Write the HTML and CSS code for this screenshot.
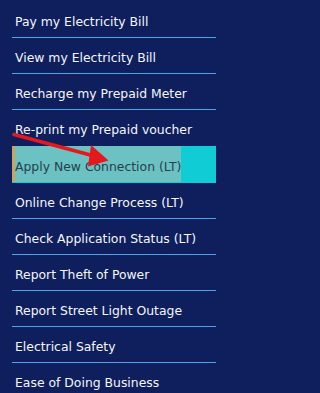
FILE: index.html
```html
<!DOCTYPE html>
<html lang="en">
<head>
<meta charset="utf-8">
<title>Menu</title>
<link rel="stylesheet" href="styles.css">
</head>
<body>
<nav class="menu">
  <ul class="menu-list">
    <li class="menu-item"><a class="menu-link" href="#">Pay my Electricity Bill</a></li>
    <li class="menu-item"><a class="menu-link" href="#">View my Electricity Bill</a></li>
    <li class="menu-item"><a class="menu-link" href="#">Recharge my Prepaid Meter</a></li>
    <li class="menu-item menu-item--before-active"><a class="menu-link" href="#">Re-print my Prepaid voucher</a></li>
    <li class="menu-item menu-item--active"><a class="menu-link" href="#"><span class="menu-mark">Apply New Connection (LT)</span></a></li>
    <li class="menu-item"><a class="menu-link" href="#">Online Change Process (LT)</a></li>
    <li class="menu-item"><a class="menu-link" href="#">Check Application Status (LT)</a></li>
    <li class="menu-item"><a class="menu-link" href="#">Report Theft of Power</a></li>
    <li class="menu-item"><a class="menu-link" href="#">Report Street Light Outage</a></li>
    <li class="menu-item"><a class="menu-link" href="#">Electrical Safety</a></li>
    <li class="menu-item"><a class="menu-link" href="#">Ease of Doing Business</a></li>
  </ul>
  <svg class="pointer-arrow" width="229" height="393" viewBox="0 0 229 393" aria-hidden="true">
    <line x1="14" y1="134.5" x2="96" y2="156.5" stroke="#e5181d" stroke-width="3.6" stroke-linecap="round"/>
    <polygon points="91,145 108.5,160.5 88,166.5" fill="#e5181d"/>
  </svg>
</nav>
</body>
</html>
```

FILE: styles.css
```css
html, body {
  margin: 0;
  padding: 0;
}

body {
  background: #0f1f5e;
  width: 229px;
  height: 393px;
  overflow: hidden;
  font-family: "DejaVu Sans", Verdana, sans-serif;
  font-size: 12.4px;
}

.menu {
  position: relative;
  padding-top: 2px;
}

.menu-list {
  list-style: none;
  margin: 0 0 0 12px;
  padding: 0;
  width: 204px;
}

.menu-item {
  border-bottom: 1px solid #4aa6e6;
}

.menu-item--before-active {
  border-bottom-color: transparent;
}

.menu-link {
  display: block;
  height: 31px;
  line-height: 31px;
  padding-top: 4px;
  padding-left: 3px;
  color: #f4f6fb;
  text-decoration: none;
  white-space: nowrap;
}

.menu-item--active {
  background: #10ccd4;
  border-bottom-color: #10ccd4;
}

.menu-item--active .menu-link {
  padding: 0;
  height: 36px;
  color: #26404e;
  display: flex;
}

.menu-mark {
  display: block;
  width: 169px;
  height: 36px;
  line-height: 31px;
  padding-top: 5px;
  box-sizing: border-box;
  padding-left: 0;
  background: #6cc2c2;
  border-left: 3px solid #c9a45c;
}

.pointer-arrow {
  position: absolute;
  left: 0;
  top: 0;
  pointer-events: none;
}
```
